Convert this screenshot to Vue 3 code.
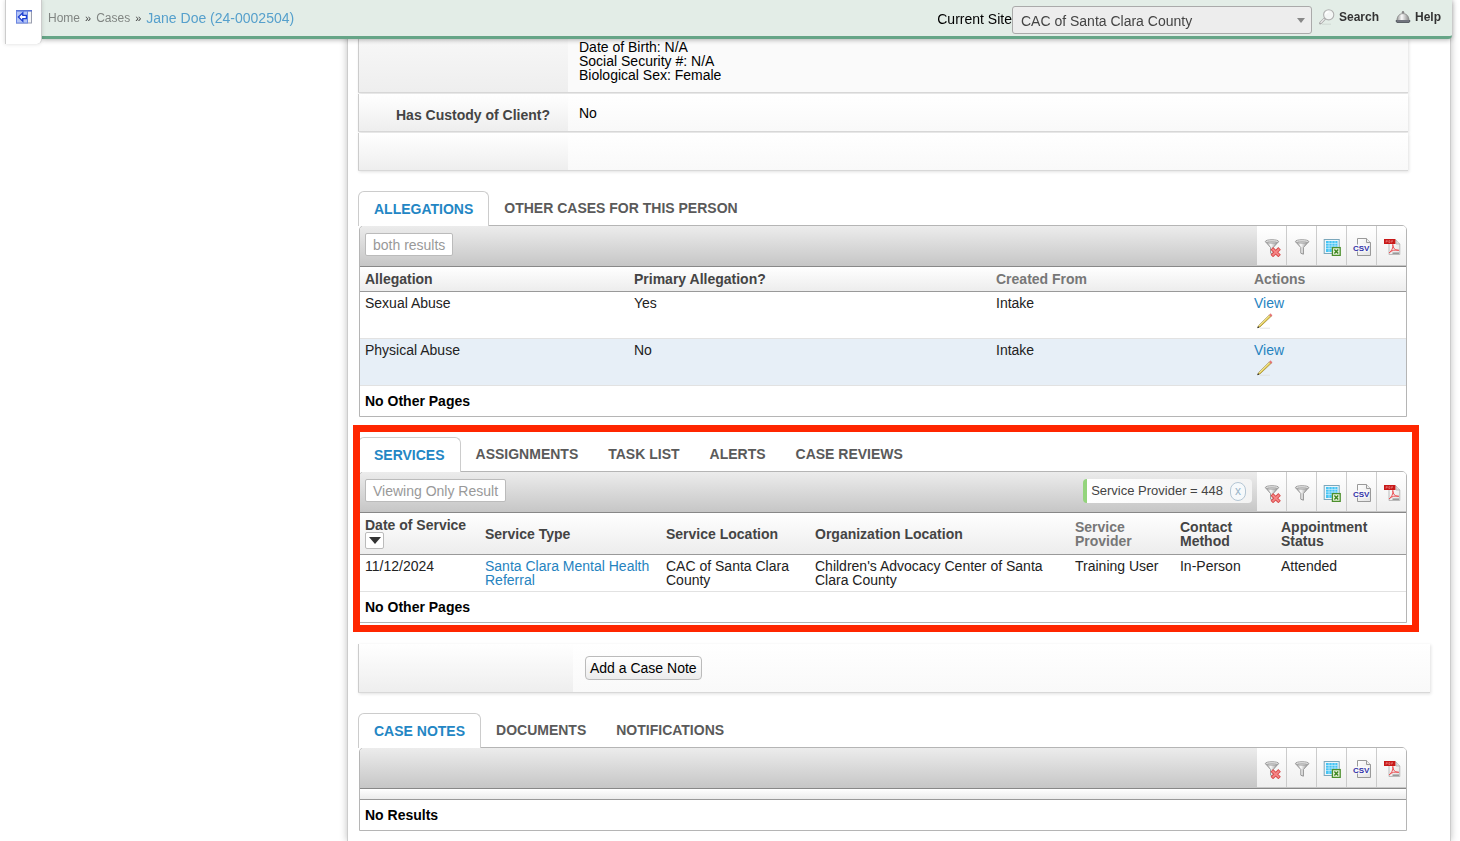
<script setup>
import { ref } from 'vue';

const site = ref('CAC of Santa Clara County');

const tools = [
    { icon: 'clear', label: 'Clear filters' },
    { icon: 'filter', label: 'Filter' },
    { icon: 'excel', label: 'Export to Excel' },
    { icon: 'csv', label: 'Export to CSV' },
    { icon: 'pdf', label: 'Export to PDF' },
];

const sections = ref([
    {
        tabs: ['ALLEGATIONS', 'OTHER CASES FOR THIS PERSON'],
        active: 0,
        summary: 'both results',
        columns: [
            { title: 'Allegation', size: 269 },
            { title: 'Primary Allegation?', size: 362 },
            { title: 'Created From', size: 258, muted: true },
            { title: 'Actions', size: 157, muted: true },
        ],
        rows: [
            [{ text: 'Sexual Abuse' }, { text: 'Yes' }, { text: 'Intake' }, { text: 'View', link: true, edit: true }],
            [{ text: 'Physical Abuse' }, { text: 'No' }, { text: 'Intake' }, { text: 'View', link: true, edit: true }],
        ],
        footer: 'No Other Pages',
    },
    {
        tabs: ['SERVICES', 'ASSIGNMENTS', 'TASK LIST', 'ALERTS', 'CASE REVIEWS'],
        active: 0,
        marked: true,
        summary: 'Viewing Only Result',
        filter: 'Service Provider = 448',
        columns: [
            { title: 'Date of Service', size: 120, sorted: true },
            { title: 'Service Type', size: 181 },
            { title: 'Service Location', size: 149 },
            { title: 'Organization Location', size: 260 },
            { title: 'Service Provider', size: 105, muted: true },
            { title: 'Contact Method', size: 101 },
            { title: 'Appointment Status', size: 130 },
        ],
        rows: [
            [
                { text: '11/12/2024' },
                { text: 'Santa Clara Mental Health Referral', link: true },
                { text: 'CAC of Santa Clara County' },
                { text: "Children's Advocacy Center of Santa Clara County" },
                { text: 'Training User' },
                { text: 'In-Person' },
                { text: 'Attended' },
            ],
        ],
        footer: 'No Other Pages',
    },
    {
        tabs: ['CASE NOTES', 'DOCUMENTS', 'NOTIFICATIONS'],
        active: 0,
        noteForm: true,
        columns: [],
        rows: [],
        footer: 'No Results',
    },
]);

const colWidth = (section, col) => {
    const total = section.columns.reduce((sum, c) => sum + c.size, 0);
    return (col.size / total) * 100 + '%';
};
</script>

<template>
    <div class="page">
        <!-- icon shapes shared by the toolbars -->
        <svg class="sprite" aria-hidden="true">
            <defs>
                <linearGradient id="metal" x1="0" x2="1" y1="0" y2="0">
                    <stop offset="0" stop-color="#999" />
                    <stop offset="0.4" stop-color="#fafafa" />
                    <stop offset="1" stop-color="#888" />
                </linearGradient>
                <linearGradient id="pageFill" x1="0" x2="1" y1="0" y2="1">
                    <stop offset="0" stop-color="#fff" />
                    <stop offset="1" stop-color="#e2e2e2" />
                </linearGradient>
            </defs>
            <symbol id="icon-filter" viewBox="0 0 18 18">
                <path d="M2.6 3.8 7.8 9.5V15.2L10.4 16.2V9.5L15.6 3.8Z" fill="url(#metal)" stroke="#8a8a8a" stroke-width="0.9" />
                <ellipse cx="9.1" cy="3.4" rx="6.6" ry="1.7" fill="#e6e6e6" stroke="#999" stroke-width="0.9" />
                <ellipse cx="9.1" cy="3.7" rx="4.8" ry="0.7" fill="#bbb" />
            </symbol>
            <symbol id="icon-clear" viewBox="0 0 18 18">
                <path d="M1.6 2.8 6.6 8.5V14.2L9.2 15.2V8.5L14.4 2.8Z" fill="url(#metal)" stroke="#8a8a8a" stroke-width="0.9" />
                <ellipse cx="8" cy="2.4" rx="6.6" ry="1.7" fill="#e6e6e6" stroke="#999" stroke-width="0.9" />
                <ellipse cx="8" cy="2.7" rx="4.8" ry="0.7" fill="#bbb" />
                <path d="M7.8 9.4 15.6 17M15.6 9.4 7.8 17" stroke="#d84a4a" stroke-width="3.6" />
                <path d="M8.4 10 15.1 16.4M15.1 10 8.4 16.4" stroke="#f58686" stroke-width="1.8" />
            </symbol>
            <symbol id="icon-excel" viewBox="0 0 18 18">
                <rect x="1.2" y="1.5" width="15" height="14" fill="#eef6fa" stroke="#7ba7bb" />
                <rect x="3" y="3" width="11.5" height="11" fill="#46c4f4" />
                <path d="M3 5.5H14.5M3 8H14.5M3 10.5H14.5M6 3V14M9 3V14M12 3V14" stroke="#d8f3fd" stroke-width="0.6" />
                <rect x="9.4" y="9.6" width="7.8" height="7.8" fill="#e7f3dc" stroke="#4c8f2c" stroke-width="1.3" />
                <path d="M11.4 11.4 15.2 15.5M15.2 11.4 11.4 15.5" stroke="#3f8620" stroke-width="1.4" />
            </symbol>
            <symbol id="icon-pdf" viewBox="0 0 18 18">
                <path d="M6 2H13L16.8 6V16.5H6Z" fill="url(#pageFill)" stroke="#b4b4b4" stroke-width="0.9" />
                <path d="M13 2V6H16.8" fill="#ddd" stroke="#aaa" stroke-width="0.7" />
                <rect x="1" y="1" width="11.4" height="5" fill="#c81818" />
                <path d="M3 4.7V2.6H4.4V3.6H3M5.8 2.6V4.5H7V2.6ZM8.6 4.7V2.6H10M8.6 3.5H9.8" stroke="#ee9a9a" stroke-width="0.5" fill="none" />
                <path d="M9.8 6.4C10 10.3 12.2 12.6 15.8 12.3C12.2 11.5 8.6 12.2 6 15C8.7 13 10.5 9.5 9.8 6.4Z" fill="none" stroke="#ec5054" stroke-width="1" />
                <path d="M9.5 15.2H16" stroke="#999" stroke-width="1.6" />
            </symbol>
            <symbol id="icon-pencil" viewBox="0 0 16 16">
                <path d="M3 15.2H13" stroke="#ddd" stroke-width="0.8" />
                <path d="M0.8 14.4 1.8 12.4 12.4 1.9 14 3.5 3 13.9Z" fill="#e4cc52" stroke="#8b7426" stroke-width="0.6" />
                <path d="M2.2 12.8 12.8 2.4" stroke="#fbf3b4" stroke-width="0.7" />
                <path d="M12.4 1.9 13.5 0.8 15.2 2.4 14 3.5Z" fill="#ee7474" stroke="#c55" stroke-width="0.4" />
                <path d="M0.2 15.2 1 13.2 2.3 14.5Z" fill="#222" />
            </symbol>
        </svg>

        <button class="side-toggle" aria-label="Show menu">
            <svg width="16" height="14" viewBox="0 0 16 14">
                <rect x="0.5" y="0.5" width="15" height="12.5" fill="#f4f4f6" stroke="#999eae" />
                <path d="M0 0.8H16" stroke="#566fd0" stroke-width="1.6" />
                <rect x="0.5" y="1.2" width="11" height="11.8" fill="#b4c4f6" stroke="#6a86e4" />
                <path d="M2.4 7 6.8 2.8V5.4H10.4V8.6H6.8V11.2Z" fill="#fff" stroke="#1d3fd0" stroke-width="1.3" />
            </svg>
        </button>

        <header class="topbar">
            <nav class="crumbs">
                <a href="#">Home</a>
                <span class="sep">»</span>
                <a href="#">Cases</a>
                <span class="sep">»</span>
                <a href="#" class="current">Jane Doe (24-0002504)</a>
            </nav>
            <label for="site">Current Site</label>
            <div class="site-select">
                <select id="site" v-model="site">
                    <option>CAC of Santa Clara County</option>
                </select>
                <svg width="8" height="5" viewBox="0 0 8 5"><path d="M0 0H8L4 5Z" fill="#888" /></svg>
            </div>
            <a href="#" class="top-link search">
                <svg width="16" height="16" viewBox="0 0 16 16">
                    <path d="M3 15.2H12" stroke="#d0d8d3" />
                    <path d="M1.4 14.2 5.8 9.6" stroke="#a8a8a8" stroke-width="2.6" stroke-linecap="round" />
                    <path d="M1.6 13.8 5.4 9.9" stroke="#f4f4f4" stroke-width="1.1" />
                    <circle cx="9.7" cy="5.8" r="5.1" fill="#f4f6f5" stroke="#b0b0b0" stroke-width="1.1" />
                    <path d="M6.6 5.4A3 3 0 0 1 9.6 2.8" fill="none" stroke="#fff" stroke-width="1.4" />
                </svg>
                Search
            </a>
            <a href="#" class="top-link">
                <svg width="16" height="16" viewBox="0 0 16 16">
                    <circle cx="8" cy="3.2" r="1.2" fill="#888" />
                    <path d="M2 11.5C2 7.2 4.6 4.6 8 4.6S14 7.2 14 11.5Z" fill="url(#metal)" stroke="#888" stroke-width="0.9" />
                    <path d="M0.8 11H15.2V12.6L14 14H2L0.8 12.6Z" fill="#5c6268" />
                    <path d="M2 12H14" stroke="#99a" stroke-width="0.7" />
                </svg>
                Help
            </a>
        </header>

        <main class="content">
            <div class="form">
                <div class="form-row first">
                    <div class="form-label"></div>
                    <div class="form-value">
                        Date of Birth: N/A<br>
                        Social Security #: N/A<br>
                        Biological Sex: Female
                    </div>
                </div>
                <div class="form-row">
                    <div class="form-label">Has Custody of Client?</div>
                    <div class="form-value">No</div>
                </div>
                <div class="form-row">
                    <div class="form-label"></div>
                    <div class="form-value"></div>
                </div>
            </div>

            <template v-for="(section, s) in sections" :key="s">
                <div v-if="section.noteForm" class="form-row note-row">
                    <div class="form-label"></div>
                    <div class="form-value"><button class="add-note">Add a Case Note</button></div>
                </div>

                <section class="group" :class="{ marked: section.marked }">
                    <div class="tabs">
                        <button
                            v-for="(tab, i) in section.tabs"
                            :key="tab"
                            class="tab"
                            :class="{ active: i === section.active }"
                            @click="section.active = i"
                        >{{ tab }}</button>
                    </div>

                    <div class="grid">
                        <div class="toolbar">
                            <button v-if="section.summary" class="summary">{{ section.summary }}</button>
                            <div class="tools">
                                <div v-if="section.filter" class="chip">
                                    {{ section.filter }}
                                    <button aria-label="Remove filter">x</button>
                                </div>
                                <div class="tool-buttons">
                                    <button v-for="tool in tools" :key="tool.icon" class="tool" :aria-label="tool.label">
                                        <svg v-if="tool.icon === 'csv'" class="csv" viewBox="0 0 20 20">
                                            <path d="M5.5 1.5H14.5L18.5 5.5V18.5H5.5Z" fill="url(#pageFill)" stroke="#999" />
                                            <path d="M14.5 1.5V5.5H18.5" fill="#eee" stroke="#999" />
                                            <rect x="4.8" y="7.5" width="12" height="7" fill="#fafafa" />
                                            <text x="1" y="14" font-size="8" font-weight="700" fill="#3030a8">CSV</text>
                                        </svg>
                                        <svg v-else :class="tool.icon"><use :href="'#icon-' + tool.icon" /></svg>
                                    </button>
                                </div>
                            </div>
                        </div>

                        <table v-if="section.columns.length">
                            <colgroup>
                                <col v-for="col in section.columns" :key="col.title" :style="{ width: colWidth(section, col) }">
                            </colgroup>
                            <thead>
                                <tr>
                                    <th v-for="col in section.columns" :key="col.title" :class="{ muted: col.muted }">
                                        {{ col.title }}
                                        <button v-if="col.sorted" class="sort" aria-label="Sort">
                                            <svg width="12" height="7" viewBox="0 0 12 7"><path d="M0 0H12L6 7Z" fill="#333" /></svg>
                                        </button>
                                    </th>
                                </tr>
                            </thead>
                            <tbody>
                                <tr v-for="(row, r) in section.rows" :key="r">
                                    <td v-for="(cell, c) in row" :key="c">
                                        <a v-if="cell.link" href="#">{{ cell.text }}</a>
                                        <template v-else>{{ cell.text }}</template>
                                        <a v-if="cell.edit" href="#" class="edit" aria-label="Edit">
                                            <svg width="16" height="16"><use href="#icon-pencil" /></svg>
                                        </a>
                                    </td>
                                </tr>
                            </tbody>
                        </table>
                        <div v-else class="empty-head"></div>

                        <div class="grid-footer">{{ section.footer }}</div>
                    </div>
                </section>
            </template>
        </main>
    </div>
</template>

<style>
body {
    background: #fff;
}
</style>

<style scoped>
.page {
    font-family: "Liberation Sans", Arial, Helvetica, sans-serif;
    font-size: 14px;
    line-height: 14px;
    color: #000;
}

.page * {
    box-sizing: border-box;
}

button, select {
    font-family: inherit;
    font-size: 14px;
    line-height: 14px;
    margin: 0;
    padding: 0;
}

a {
    color: #2683bf;
    text-decoration: none;
}

.sprite {
    position: absolute;
    width: 0;
    height: 0;
}

/* top bar */
.side-toggle {
    position: fixed;
    z-index: 11;
    top: 0;
    left: 5px;
    width: 37px;
    height: 44px;
    padding-bottom: 10px;
    background: #fff;
    border: solid #ccc;
    border-width: 0 1px;
    border-radius: 0 0 5px 0;
    box-shadow: 0 0 4px rgba(0, 0, 0, 0.15);
}

.side-toggle svg {
    display: block;
    margin: 0 auto;
}

.topbar {
    position: fixed;
    z-index: 10;
    top: 0;
    left: 42px;
    right: 8px;
    height: 39px;
    display: flex;
    align-items: center;
    padding: 0 11px 0 6px;
    background: #e3ede7;
    border-bottom: 3px solid #66a587;
    border-radius: 0 0 4px 0;
    box-shadow: 0 1px 5px rgba(0, 0, 0, 0.3);
}

.crumbs {
    display: flex;
    align-items: center;
    gap: 5px;
    margin-right: auto;
    font-size: 12px;
}

.crumbs a {
    color: #808582;
}

.crumbs .sep {
    font-size: 11px;
    color: #444;
}

.crumbs .current {
    font-size: 14px;
    color: #56a0cc;
}

.topbar label {
    padding-top: 2px;
}

.site-select {
    position: relative;
    padding-top: 4px;
}

.site-select select {
    display: block;
    width: 300px;
    height: 28px;
    padding: 2px 24px 0 8px;
    line-height: 20px;
    appearance: none;
    color: #444;
    background: #ededed;
    border: 1px solid #aaa;
    border-radius: 3px;
}

.site-select svg {
    position: absolute;
    right: 7px;
    top: 16px;
}

.top-link {
    display: flex;
    align-items: center;
    gap: 4px;
    margin-bottom: 2px;
    font-size: 12px;
    font-weight: bold;
    color: #333;
}

.search {
    margin: 0 16px 2px 7px;
}

/* main panel */
.content {
    min-height: 100vh;
    margin: 0 9px 0 347px;
    padding: 39px 0 10px 10px;
    background: #fff;
    border: solid #ccc;
    border-width: 0 1px;
    box-shadow: 0 0 7px rgba(0, 0, 0, 0.25);
}

.form {
    display: flex;
    flex-direction: column;
    gap: 1px;
    margin-right: 42px;
}

.form-row {
    display: flex;
    min-height: 38px;
    border-bottom: 1px solid #d8d8d8;
    box-shadow: 1px 1px 3px rgba(0, 0, 0, 0.12);
}

.form-label {
    flex: none;
    width: 210px;
    padding: 14px 18px 8px 0;
    text-align: right;
    font-weight: bold;
    color: #444;
    background: linear-gradient(#fff, #eee);
    border-left: 1px solid #ccc;
}

.form-value {
    flex: 1;
    padding: 12px 11px 10px;
    background: linear-gradient(#fff, #f9f9f9);
}

.first .form-label {
    background: linear-gradient(#f7f7f7, #eee);
}

.first .form-value {
    padding-top: 1px;
    background: #fafafa;
}

.note-row {
    margin: 21px 20px 0 0;
}

.note-row .form-label {
    width: 215px;
}

.note-row .form-value {
    padding: 12px;
}

.add-note {
    display: block;
    height: 24px;
    padding: 0 4px;
    color: #000;
    background: linear-gradient(#fff, #ececec);
    border: 1px solid #bbb;
    border-radius: 4px;
}

/* tabs */
.group {
    position: relative;
    margin: 20px 43px 0 0;
}

.marked::after {
    content: "";
    position: absolute;
    z-index: 2;
    inset: -12px -12px -9px -5px;
    border: 7px solid #ff2600;
    pointer-events: none;
}

.tabs {
    position: relative;
    z-index: 1;
    display: flex;
    margin-bottom: -1px;
}

.tab {
    height: 35px;
    padding: 0 15px 2px;
    font-weight: bold;
    color: #5a5a5a;
    background: none;
    border: 0;
}

.tab.active {
    padding-bottom: 0;
    color: #2386c4;
    background: #fff;
    border: solid #ccc;
    border-width: 1px 1px 0;
    border-radius: 6px 6px 0 0;
}

/* grid */
.grid {
    margin-left: 1px;
    border: 1px solid #b5b5b5;
    border-radius: 5px 5px 0 0;
    color: #222;
}

.toolbar {
    display: flex;
    align-items: flex-start;
    height: 41px;
    background: linear-gradient(#ececec, #c6c6c6);
    border-bottom: 1px solid #888;
    border-radius: 4px 4px 0 0;
}

.summary {
    height: 23px;
    margin: 7px 0 0 5px;
    padding: 0 7px;
    color: #999;
    background: #fff;
    border: 1px solid #bbb;
    border-radius: 2px;
}

.tools {
    display: flex;
    margin-left: auto;
}

.chip {
    display: flex;
    align-items: center;
    gap: 7px;
    height: 24px;
    margin: 7px 5px 0 0;
    padding: 0 6px 0 4px;
    font-size: 13px;
    color: #444;
    background: linear-gradient(90deg, #fff, #f3f3f3);
    border-left: 4px solid #94d47c;
    border-radius: 4px;
}

.chip button {
    width: 16px;
    height: 19px;
    font-size: 12px;
    line-height: 12px;
    color: #9ab4c8;
    background: #f6f9fb;
    border: 1px solid #b4c6d4;
    border-radius: 8px;
}

.tool-buttons {
    display: flex;
}

.tool {
    display: flex;
    align-items: center;
    justify-content: center;
    width: 30px;
    height: 39px;
    padding-top: 2px;
    background: linear-gradient(#fff, #efefef);
    border: 0;
    border-right: 1px solid #ccc;
}

.tool:last-child {
    width: 29px;
    border-right: 0;
    border-radius: 0 4px 0 0;
}

.tool svg {
    width: 18px;
    height: 18px;
}

.tool .csv {
    width: 20px;
    height: 20px;
}

.tool .clear {
    margin: 2px 0 0 3px;
}

table {
    width: 100%;
    table-layout: fixed;
    border-collapse: separate;
    border-spacing: 0;
}

thead tr {
    background: linear-gradient(#fff, #ececec);
}

th {
    padding: 5px;
    text-align: left;
    color: #444;
    border-bottom: 1px solid #999;
}

th.muted {
    color: #777;
}

.sort {
    display: flex;
    align-items: center;
    justify-content: center;
    width: 19px;
    height: 17px;
    background: #fff;
    border: 1px solid #bbb;
    border-radius: 2px;
}

td {
    padding: 4px 5px;
    vertical-align: top;
    border-bottom: 1px solid #e2e2e2;
}

tbody tr:nth-child(even) {
    background: #e7eff7;
}

.edit {
    display: block;
    width: 16px;
    height: 16px;
    margin: 3px 0 5px 3px;
}

.edit svg {
    display: block;
}

.empty-head {
    height: 11px;
    background: linear-gradient(#fff, #ececec);
    border-bottom: 1px solid #999;
}

.grid-footer {
    padding: 8px 5px;
    font-weight: bold;
    color: #000;
}
</style>
